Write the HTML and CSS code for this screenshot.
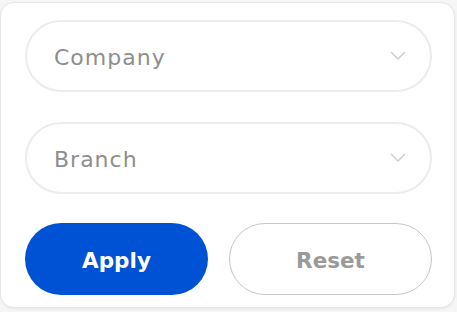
FILE: index.html
```
<!DOCTYPE html>
<html>
<head>
<meta charset="utf-8">
<link rel="stylesheet" href="styles.css">
</head>
<body>
<div class="card">
  <div class="select">
    <span class="label">Company</span>
    <svg class="chev" width="16" height="10" viewBox="0 0 16 10"><path d="M1.5 1.5 L8 8 L14.5 1.5" fill="none" stroke="#cfcfcf" stroke-width="1.6" stroke-linecap="round" stroke-linejoin="round"/></svg>
  </div>
  <div class="select">
    <span class="label">Branch</span>
    <svg class="chev" width="16" height="10" viewBox="0 0 16 10"><path d="M1.5 1.5 L8 8 L14.5 1.5" fill="none" stroke="#cfcfcf" stroke-width="1.6" stroke-linecap="round" stroke-linejoin="round"/></svg>
  </div>
  <div class="actions">
    <button class="btn apply">Apply</button>
    <button class="btn reset">Reset</button>
  </div>
</div>
</body>
</html>
```
FILE: styles.css
```
html, body {
  margin: 0;
  padding: 0;
  background: #f6f6f6;
  font-family: "DejaVu Sans", "Open Sans", sans-serif;
}
body {
  padding-top: 2px;
  width: 457px;
  height: 310px;
}
.card {
  box-sizing: border-box;
  width: 455px;
  height: 306px;
  background: #fff;
  border: 1px solid #e6e6e6;
  border-radius: 14px;
  box-shadow: 0 1px 3px rgba(0,0,0,0.06);
  padding: 17px 22px 0 24px;
  display: flex;
  flex-direction: column;
}
.select {
  box-sizing: border-box;
  height: 72px;
  border: 2px solid #ececec;
  border-radius: 36px;
  display: flex;
  align-items: center;
  justify-content: space-between;
  padding: 0 24px 0 27px;
  margin-bottom: 30px;
}
.select + .select {
  margin-bottom: 29px;
}
.label {
  font-size: 22px;
  color: #8e8e8e;
  letter-spacing: 1px;
  padding-top: 2px;
}
.chev {
  display: block;
}
.actions {
  display: grid;
  grid-template-columns: 183px 1fr;
  column-gap: 21px;
}
.btn {
  box-sizing: border-box;
  height: 72px;
  border-radius: 36px;
  font-family: "DejaVu Sans", "Open Sans", sans-serif;
  font-weight: 700;
  font-size: 21.5px;
  padding: 2px 0 0 0;
  cursor: pointer;
}
.apply {
  background: #0052d4;
  color: #fff;
  border: none;
}
.reset {
  background: #fff;
  color: #9a9a9a;
  border: 1.5px solid #c6c6c6;
}
```
